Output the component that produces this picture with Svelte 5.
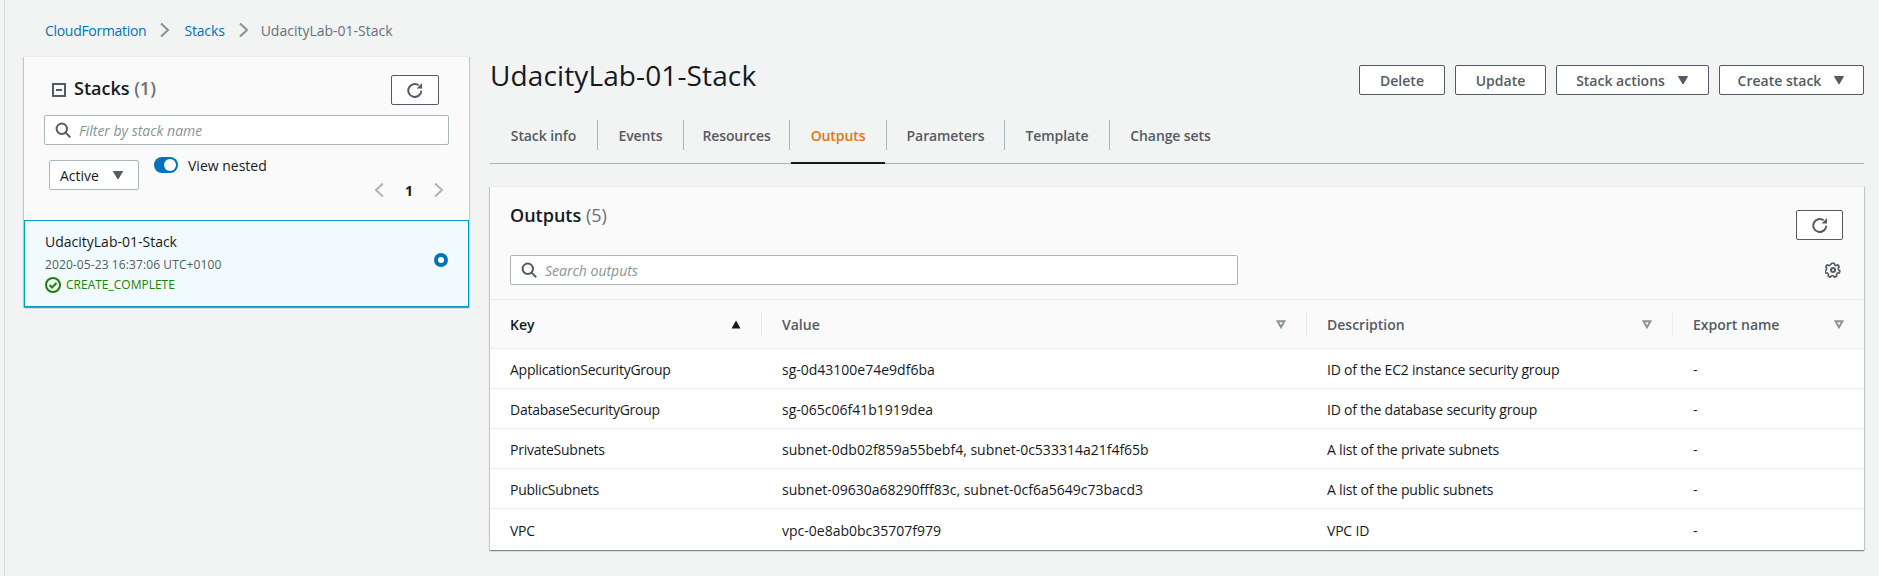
<script>
  const tabs = ['Stack info', 'Events', 'Resources', 'Outputs', 'Parameters', 'Template', 'Change sets'];
  const rows = [
    ['ApplicationSecurityGroup', 'sg-0d43100e74e9df6ba', 'ID of the EC2 instance security group', '-'],
    ['DatabaseSecurityGroup', 'sg-065c06f41b1919dea', 'ID of the database security group', '-'],
    ['PrivateSubnets', 'subnet-0db02f859a55bebf4, subnet-0c533314a21f4f65b', 'A list of the private subnets', '-'],
    ['PublicSubnets', 'subnet-09630a68290fff83c, subnet-0cf6a5649c73bacd3', 'A list of the public subnets', '-'],
    ['VPC', 'vpc-0e8ab0bc35707f979', 'VPC ID', '-']
  ];
</script>

{#snippet refresh()}
  <svg width="16" height="16" viewBox="0 0 16 16" fill="none" stroke="#545b64" stroke-width="2"><path d="M14.3 8.7a6.5 6.5 0 1 1-2.6-5.4" /><path d="M15 1v5.6H9.6z" fill="#545b64" stroke="none" /></svg>
{/snippet}
{#snippet search()}
  <svg width="16" height="16" viewBox="0 0 16 16" fill="none" stroke="#545b64" stroke-width="2"><circle cx="6.8" cy="6.8" r="5.2" /><path d="M10.6 10.6l4.6 4.6" /></svg>
{/snippet}
{#snippet caret(color = '#545b64')}
  <svg class="caret" width="12" height="10" viewBox="0 0 12 10"><path d="M1.5 1.5h9L6 9z" fill={color} stroke={color} stroke-linejoin="round" /></svg>
{/snippet}
{#snippet filter()}
  <svg class="filter" width="10" height="9" viewBox="0 0 10 9" fill="none" stroke="#879596" stroke-width="2"><path d="M1.5 1.2h7L5 7.2z" /></svg>
{/snippet}

<div class="page">
  <nav class="crumbs">
    <span class="link cf">CloudFormation</span>
    <svg width="10" height="16" viewBox="0 0 10 16" fill="none" stroke="#879596" stroke-width="2"><path d="M1 1.5l7 6.5-7 6.5" /></svg>
    <span class="link st">Stacks</span>
    <svg width="10" height="16" viewBox="0 0 10 16" fill="none" stroke="#879596" stroke-width="2"><path d="M1 1.5l7 6.5-7 6.5" /></svg>
    <span class="here">UdacityLab-01-Stack</span>
  </nav>

  <div class="content">
    <aside class="side">
      <div class="side-top">
        <div class="side-head">
          <svg class="minus" width="14" height="14" viewBox="0 0 14 14" fill="none" stroke="#545b64" stroke-width="2"><rect x="1" y="1" width="12" height="12" /><path d="M4 7h6" /></svg>
          <h2>Stacks <span class="count">(1)</span></h2>
          <button class="btn icon">{@render refresh()}</button>
        </div>
        <div class="input side-input">
          {@render search()}
          <span class="ph">Filter by stack name</span>
        </div>
        <div class="side-controls">
          <div class="select">Active {@render caret()}</div>
          <div class="toggle-row">
            <span class="toggle"><span class="knob"></span></span>
            <span>View nested</span>
          </div>
          <div class="pager">
            <svg width="10" height="16" viewBox="0 0 10 16" fill="none" stroke="#aab7b8" stroke-width="2"><path d="M9 1.5L2 8l7 6.5" /></svg>
            <b>1</b>
            <svg width="10" height="16" viewBox="0 0 10 16" fill="none" stroke="#aab7b8" stroke-width="2"><path d="M1 1.5L8 8l-7 6.5" /></svg>
          </div>
        </div>
      </div>
      <div class="stack-item">
        <div class="stack-text">
          <div class="stack-name">UdacityLab-01-Stack</div>
          <div class="stack-date">2020-05-23 16:37:06 UTC+0100</div>
          <div class="stack-status">
            <svg width="16" height="16" viewBox="0 0 16 16" fill="none" stroke="#1d8102" stroke-width="2"><circle cx="8" cy="8" r="7" /><path d="M4.5 8l2.5 2.5 4.5-4.5" /></svg>
            CREATE_COMPLETE
          </div>
        </div>
        <span class="radio"></span>
      </div>
    </aside>

    <main class="main">
      <header class="title-row">
        <h1>UdacityLab-01-Stack</h1>
        <div class="actions">
          <button class="btn w-del">Delete</button>
          <button class="btn w-upd">Update</button>
          <button class="btn w-act">Stack actions {@render caret()}</button>
          <button class="btn w-cre">Create stack {@render caret()}</button>
        </div>
      </header>

      <div class="tabs">
        {#each tabs as t}
          <div class="tab" class:active={t === 'Outputs'}><span>{t}</span></div>
        {/each}
      </div>

      <section class="panel">
        <div class="panel-top">
          <div class="panel-head">
            <h2>Outputs <span class="light">(5)</span></h2>
            <button class="btn icon-sm">{@render refresh()}</button>
          </div>
          <div class="panel-search">
            <div class="input out-input">
              {@render search()}
              <span class="ph">Search outputs</span>
            </div>
            <svg width="16" height="16" viewBox="0 0 16 16" fill="none" stroke="#545b64" stroke-width="2"><circle cx="8" cy="8" r="2" /><path d="M6.8 1.2h2.4l.4 1.8 1.5.7 1.7-.9 1.5 1.9-1.1 1.4.3 1.7 1.4.9-.6 2.3-1.9.1-1 1.3.3 1.8-2.2 1-1.2-1.4h-1.7l-1.2 1.4-2.2-1 .3-1.8-1-1.3-1.9-.1-.6-2.3 1.4-.9.3-1.7-1.1-1.4 1.5-1.9 1.7.9 1.5-.7z" stroke-width="1.6" stroke-linejoin="round" /></svg>
          </div>
        </div>

        <div class="thead">
          <div class="th key"><span>Key</span><svg width="10" height="9" viewBox="0 0 10 9"><path d="M0.5 8.5h9L5 0.5z" fill="#16191f" /></svg></div>
          <div class="th"><span>Value</span>{@render filter()}</div>
          <div class="th"><span>Description</span>{@render filter()}</div>
          <div class="th last"><span>Export name</span>{@render filter()}</div>
        </div>
        {#each rows as r}
          <div class="tr">
            {#each r as c}<div class="td">{c}</div>{/each}
          </div>
        {/each}
      </section>
    </main>
  </div>
</div>

<style>
  :global(body) {
    margin: 0;
    background: #f2f3f3;
  }
  .page {
    box-sizing: border-box;
    width: 1879px;
    height: 576px;
    padding-left: 4px;
    overflow: hidden;
    font-family: "Open Sans", "Noto Sans", sans-serif;
    font-size: 14px;
    color: #16191f;
    background: linear-gradient(#d5dbdb, #d5dbdb) 4px 0 / 1px 100% no-repeat #f2f3f3;
  }
  h1, h2 { margin: 0; font-weight: 400; }
  button { font-family: inherit; }

  .crumbs {
    display: flex;
    align-items: center;
    height: 56px;
    padding: 4px 0 0 41px;
    box-sizing: border-box;
    gap: 14px;
    font-size: 14px;
  }
  .link { color: #0073bb; }
  .cf { letter-spacing: -0.3px; }
  .st { letter-spacing: -0.15px; }
  .here { color: #687078; margin-left: -2px; }

  .content {
    display: flex;
    align-items: flex-start;
    padding-left: 20px;
    gap: 21px;
  }

  .side {
    width: 445px;
    flex: none;
    box-sizing: border-box;
    background: #fafafa;
    border-top: 1px solid #eaeded;
    box-shadow: 0 1px 1px 0 rgba(0,28,36,.3), 1px 1px 1px 0 rgba(0,28,36,.15), -1px 1px 1px 0 rgba(0,28,36,.15);
  }
  .side-top { height: 163px; padding: 18px 20px 0; box-sizing: border-box; }
  .side-head { display: flex; align-items: center; height: 30px; padding-left: 8px; }
  .side-head h2 { font-size: 18px; font-weight: 600; margin-left: 8px; flex: 1; line-height: 30px; margin-top: -4px; }
  .count { color: #687078; }
  .minus { flex: none; }
  .btn {
    box-sizing: border-box;
    height: 30px;
    background: #fff;
    border: 1px solid #545b64;
    border-radius: 2px;
    color: #545b64;
    font-size: 14px;
    font-weight: 600;
    display: inline-flex;
    align-items: center;
    justify-content: center;
    gap: 12px;
    padding: 0;
  }
  .icon { width: 48px; margin-right: 10px; }
  .input {
    box-sizing: border-box;
    height: 30px;
    background: #fff;
    border: 1px solid #aab7b8;
    border-radius: 2px;
    display: flex;
    align-items: center;
    gap: 8px;
    padding-left: 10px;
  }
  .side-input { margin-top: 10px; width: 405px; }
  .ph { color: #879596; font-style: italic; }
  .side-controls { display: flex; margin-top: 12px; padding-left: 5px; }
  .select {
    box-sizing: border-box;
    width: 90px;
    height: 30px;
    margin-top: 3px;
    background: #fff;
    border: 1px solid #aab7b8;
    border-radius: 2px;
    display: flex;
    align-items: center;
    justify-content: space-between;
    padding: 0 14px 0 10px;
    color: #16191f;
  }
  .toggle-row { display: flex; align-items: center; gap: 10px; margin-left: 15px; height: 16px; }
  .toggle { width: 24px; height: 16px; border-radius: 8px; background: #0073bb; position: relative; display: block; }
  .knob { position: absolute; right: 2px; top: 2px; width: 12px; height: 12px; border-radius: 50%; background: #fff; }
  .pager {
    margin-left: auto;
    margin-right: 5px;
    margin-top: 25px;
    width: 70px;
    height: 16px;
    display: flex;
    align-items: center;
    justify-content: space-between;
  }
  .pager b { font-size: 14px; }

  .stack-item {
    box-sizing: border-box;
    height: 87px;
    background: #f1faff;
    border: 1px solid #00a1c9;
    padding: 10px 20px 0 20px;
    display: flex;
    justify-content: space-between;
  }
  .stack-name { line-height: 22px; }
  .stack-date { font-size: 12px; color: #545b64; line-height: 16px; margin-top: 4px; letter-spacing: 0.1px; }
  .stack-status { font-size: 12px; color: #1d8102; display: flex; align-items: center; gap: 5px; margin-top: 4px; line-height: 16px; }
  .radio {
    width: 14px; height: 14px;
    box-sizing: border-box;
    border: 4px solid #0073bb;
    border-radius: 50%;
    background: #fff;
    margin-top: 22px;
  }

  .main { width: 1374px; flex: none; }
  .title-row { display: flex; justify-content: space-between; height: 64px; padding-top: 4px; box-sizing: border-box; }
  .title-row h1 { font-size: 28px; line-height: 30px; margin-top: 0; letter-spacing: 0.12px; }
  .actions { display: flex; gap: 10px; margin-top: 5px; }
  .w-del { width: 86px; }
  .w-upd { width: 91px; }
  .w-act { width: 153px; }
  .w-cre { width: 145px; }

  .tabs {
    display: grid;
    grid-template-columns: 108px 86px 106px 97px 118px 105px 121px 1fr;
    height: 44px;
    box-sizing: border-box;
    border-bottom: 1px solid #aab7b8;
    padding-bottom: 14px;
    font-weight: 600;
    color: #545b64;
    letter-spacing: -0.1px;
  }
  .tab {
    display: flex;
    align-items: center;
    justify-content: center;
    border-right: 1px solid #aab7b8;
    height: 30px;
    position: relative;
  }
  .tab:last-of-type { border-right: none; }
  .tab.active { color: #ec7211; }
  .tab.active::after {
    content: "";
    position: absolute;
    left: 1px; right: 1px;
    bottom: -14px;
    height: 2px;
    background: #16191f;
  }

  .panel {
    margin-top: 22px;
    background: #fff;
    border-top: 1px solid #eaeded;
    box-shadow: 0 1px 1px 0 rgba(0,28,36,.3), 1px 1px 1px 0 rgba(0,28,36,.15), -1px 1px 1px 0 rgba(0,28,36,.15);
  }
  .panel-top { background: #fafafa; height: 113px; box-sizing: border-box; border-bottom: 1px solid #eaeded; padding: 0 20px; }
  .panel-head { display: flex; justify-content: space-between; height: 68px; padding-right: 1px; }
  .panel-head h2 { font-size: 18px; font-weight: 600; margin-top: 16px; line-height: 24px; }
  .light { font-weight: 400; color: #687078; }
  .icon-sm { width: 47px; margin-top: 23px; }
  .panel-search { display: flex; justify-content: space-between; align-items: center; padding-right: 3px; height: 30px; }
  .out-input { width: 728px; }

  .thead, .tr {
    display: grid;
    grid-template-columns: 272px 545px 366px 1fr;
  }
  .thead { height: 49px; background: #fafafa; border-bottom: 1px solid #eaeded; box-sizing: border-box; align-items: center; }
  .th {
    display: flex;
    align-items: center;
    justify-content: space-between;
    height: 24px;
    padding: 0 20px;
    box-sizing: border-box;
    font-weight: 600;
    color: #545b64;
    border-right: 1px solid #eaeded;
  }
  .th.key { color: #16191f; }
  .th.last { border-right: none; }
  .tr { height: 40px; box-sizing: border-box; border-bottom: 1px solid #eaeded; align-items: center; }
  .tr:last-child { border-bottom: none; height: 41px; }
  .td { padding: 2px 0 0 20px; white-space: nowrap; }
  .td:nth-child(1) { letter-spacing: -0.25px; }
  .td:nth-child(3) { letter-spacing: -0.2px; }
</style>
